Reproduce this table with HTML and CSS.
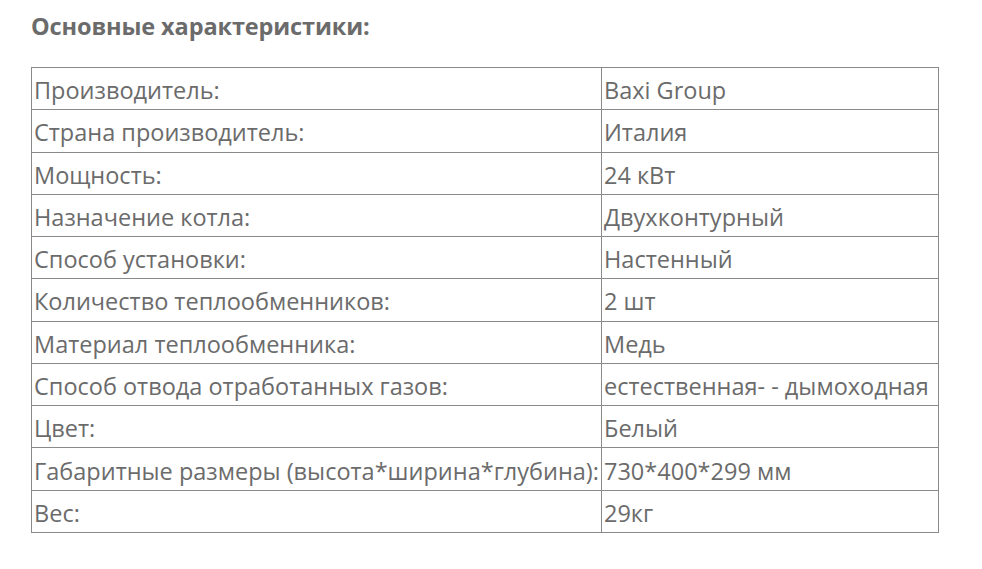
FILE: index.html
```html
<!DOCTYPE html>
<html lang="ru">
<head>
<meta charset="utf-8">
<link rel="stylesheet" href="styles.css">
</head>
<body>
<div class="page">
  <h3 class="title">Основные характеристики:</h3>
  <table class="specs">
    <colgroup><col class="col-name"><col class="col-value"></colgroup>
    <tr><td>Производитель:</td><td>Baxi Group</td></tr>
    <tr><td>Страна производитель:</td><td>Италия</td></tr>
    <tr><td>Мощность:</td><td>24 кВт</td></tr>
    <tr><td>Назначение котла:</td><td>Двухконтурный</td></tr>
    <tr><td>Способ установки:</td><td>Настенный</td></tr>
    <tr><td>Количество теплообменников:</td><td>2 шт</td></tr>
    <tr><td>Материал теплообменника:</td><td>Медь</td></tr>
    <tr><td>Способ отвода отработанных газов:</td><td>естественная- - дымоходная</td></tr>
    <tr><td>Цвет:</td><td>Белый</td></tr>
    <tr><td>Габаритные размеры (высота*ширина*глубина):</td><td>730*400*299 мм</td></tr>
    <tr><td>Вес:</td><td>29кг</td></tr>
  </table>
</div>
</body>
</html>
```

FILE: styles.css
```css
html, body {
  margin: 0;
  padding: 0;
  background: #fff;
}
.page {
  padding: 11px 0 0 31px;
  font-family: "Open Sans", "Noto Sans", sans-serif;
  color: #6b6b6b;
}
.title {
  margin: 0 0 25px 0;
  font-size: 23.5px;
  font-weight: 700;
  line-height: 31px;
  color: #6b6b6b;
  letter-spacing: -0.12px;
}
.specs {
  border-collapse: collapse;
  width: 908px;
  table-layout: fixed;
  font-size: 23.5px;
}
.col-name { width: 570px; }
.specs td {
  border: 1px solid #8a8a8a;
  padding: 4px 0 0 2px;
  height: 37.27px;
  line-height: 37px;
  white-space: nowrap;
  overflow: hidden;
}
```
